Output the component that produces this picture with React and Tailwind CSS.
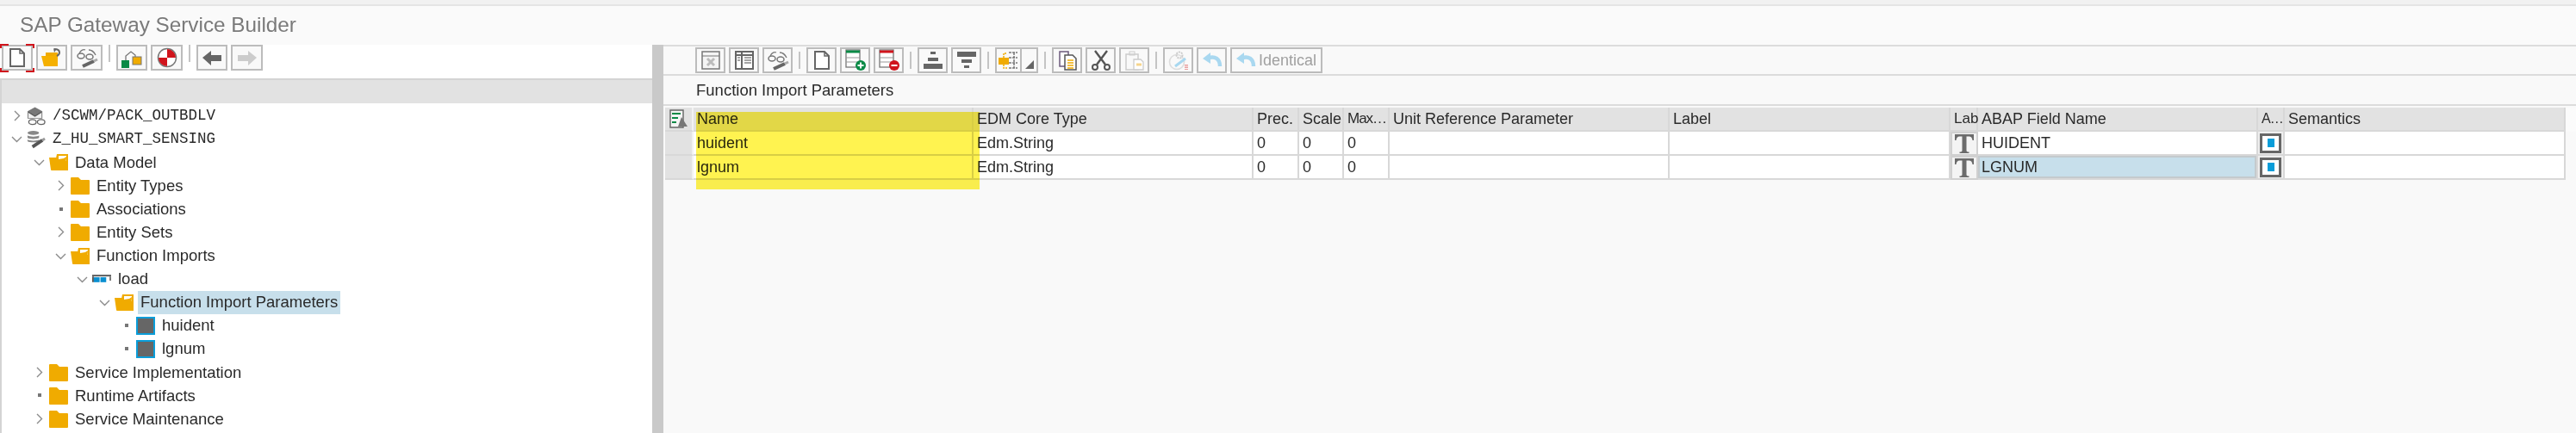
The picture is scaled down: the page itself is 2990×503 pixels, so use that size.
const sans = "font-['Liberation_Sans',Arial,sans-serif]";

const Btn = ({ children, small, wide }) => (
  <div className={`flex h-[30px] shrink-0 items-center justify-center border-2 border-[#bcbcbc] bg-[#f9f9f9] ${small ? 'w-[35px]' : wide ? 'w-[37px]' : 'w-[36px]'}`}>
    {children}
  </div>
);
const Sep = () => <div className="mx-[3px] h-[20px] w-[2px] shrink-0 bg-[#c4c4c4]" />;

const Svg = ({ children, w = 24, h = 24 }) => (
  <svg width={w} height={h} viewBox={`0 0 ${w} ${h}`} fill="none">{children}</svg>
);

const DocIcon = () => (
  <Svg><path d="M4 2h11l5 5v15H4z" fill="#fff" stroke="#666" strokeWidth="2" /><path d="M15 2v5h5" stroke="#666" strokeWidth="1.5" /></Svg>
);
const OpenIcon = () => (
  <Svg w={26} h={24}>
    <path d="M6 6h14v16H6z" fill="#f0ab00" />
    <path d="M1 10h14l5-4v16H4z" fill="#f5b000" />
    <path d="M16 2c4 0 6 1 6 4 0 2-1 3-3 4" stroke="#666" strokeWidth="2" /><path d="M15 1l3 2-2 3z" fill="#666" />
  </Svg>
);
const GlassIcon = () => (
  <Svg w={26} h={24}>
    <path d="M4 7c2-4 5-5 7-4M15 3c3 0 6 2 8 6" stroke="#777" strokeWidth="1.3" />
    <ellipse cx="6" cy="10" rx="4" ry="3" stroke="#777" strokeWidth="1.5" />
    <ellipse cx="16" cy="11" rx="4" ry="3" stroke="#777" strokeWidth="1.5" />
    <path d="M8 22l13-6" stroke="#666" strokeWidth="4" /><path d="M21 16l4-2" stroke="#aaa" strokeWidth="3" />
  </Svg>
);
const TreeIcon = () => (
  <Svg w={26} h={24}>
    <path d="M6 15v-5l6-5 5 4v3" stroke="#777" strokeWidth="1.3" />
    <rect x="1" y="15" width="9" height="9" fill="#0a8a46" />
    <rect x="14" y="11" width="10" height="9" fill="#f0ab00" stroke="#777" />
  </Svg>
);
const TargetIcon = () => (
  <Svg>
    <circle cx="12" cy="12" r="10.500" fill="#fff" stroke="#777" strokeWidth="1.500" />
    <path d="M12 2a10 10 0 0 1 10 10H12zM12 22A10 10 0 0 1 2 12h10z" fill="#d0141c" />
  </Svg>
);
const Arrow = ({ dir, color }) => (
  <Svg>
    <path d={dir === 'l' ? 'M1 12l10-8v5h12v7H11v5z' : 'M23 12l-10-8v5H1v7h12v5z'} fill={color} />
  </Svg>
);
const TableX = () => (
  <Svg>
    <rect x="2" y="2" width="20" height="20" fill="#f4f4f4" stroke="#777" strokeWidth="1.500" />
    <path d="M2 7h20" stroke="#777" />
    <path d="M8 10l8 8M16 10l-8 8" stroke="#bbb" strokeWidth="3" />
  </Svg>
);
const TableCols = () => (
  <Svg>
    <rect x="2" y="2" width="20" height="20" fill="#fff" stroke="#666" strokeWidth="2" />
    <path d="M2 6h20M9 2v20" stroke="#666" strokeWidth="2" />
    <path d="M12 9h8M12 12h8M12 15h8M4 9h3M4 12h3" stroke="#888" strokeWidth="1.300" />
  </Svg>
);
const RowIcon = ({ color, plus }) => (
  <Svg w={26} h={26}>
    <rect x="2" y="1" width="16" height="20" fill="#fff" stroke="#777" strokeWidth="1.300" />
    <path d="M2 3h16" stroke={color} strokeWidth="3" />
    <path d="M2 10h16M2 15h16" stroke="#999" />
    <circle cx="19" cy="19" r="6" fill={color} />
    <path d="M15.500 19h7" stroke="#fff" strokeWidth="2" />
    {plus && <path d="M19 15.500v7" stroke="#fff" strokeWidth="2" />}
  </Svg>
);
const SortUp = () => (
  <Svg><path d="M9 2h6v3H9zM6 9h12v4H6zM1 16h22v6H1z" fill="#666" /></Svg>
);
const SortDown = () => (
  <Svg><path d="M1 2h22v6H1zM6 11h12v4H6zM9 18h6v3H9z" fill="#666" /></Svg>
);
const Hier = () => (
  <Svg w={26} h={24}>
    <rect x="1" y="9" width="12" height="8" fill="#f0ab00" />
    <path d="M7 9V4h4M7 17v4h4" stroke="#f0ab00" strokeWidth="1.500" strokeDasharray="2 1" />
    <path d="M13 3h10M13 9h10M13 15h10M13 21h10M19 3v18" stroke="#777" strokeWidth="1.500" strokeDasharray="3 1" />
  </Svg>
);
const CopyIcon = () => (
  <Svg>
    <path d="M3 2h10v17H3z" fill="#fff" stroke="#6c5a7c" strokeWidth="1.500" />
    <path d="M9 6h9l4 4v13H9z" fill="#fff" stroke="#555" strokeWidth="1.500" />
    <path d="M12 12h7M12 15h7M12 18h7M12 21h7" stroke="#f0ab00" strokeWidth="1.600" />
  </Svg>
);
const Scissors = () => (
  <Svg>
    <path d="M5 1l12 16M19 1L7 17" stroke="#555" strokeWidth="2.400" />
    <circle cx="5" cy="20" r="3" stroke="#555" strokeWidth="2" />
    <circle cx="19" cy="20" r="3" stroke="#555" strokeWidth="2" />
  </Svg>
);
const PasteIcon = () => (
  <Svg>
    <path d="M2 5h14v18H2z" stroke="#ccc" strokeWidth="1.500" />
    <rect x="6" y="2" width="6" height="4" stroke="#ccc" />
    <path d="M11 11h8l3 3v9H11z" fill="#fff" stroke="#ccc" strokeWidth="1.300" />
    <path d="M14 17h6" stroke="#f6d58c" strokeWidth="3" />
  </Svg>
);
const GearIcon = () => (
  <Svg>
    <circle cx="10" cy="14" r="8.500" stroke="#ddd" strokeWidth="1.600" />
    <circle cx="13" cy="6" r="3.500" stroke="#ccc" strokeWidth="2" strokeDasharray="2 1" />
    <path d="M8 19l12-9" stroke="#a8d8f0" strokeWidth="3" />
    <path d="M21 17v6" stroke="#eaa0a0" strokeWidth="4" strokeDasharray="1.500 1" />
  </Svg>
);
const Undo = () => (
  <Svg>
    <path d="M1 10l9-7v13z" fill="#a9d8f0" />
    <path d="M8 9c7-2 13 1 13 10" stroke="#a9d8f0" strokeWidth="4.500" />
  </Svg>
);
const TextTypeIcon = () => (
  <svg width="24" height="24" viewBox="0 0 24 24">
    <path d="M1 1h22v7h-1.500c-.5-3-1.500-4.500-4-4.500h-3v16c0 1.500.5 2 3 2V23H6.500v-1.500c2.500 0 3-.5 3-2v-16h-3c-2.500 0-3.500 1.500-4 4.500H1z" fill="#6b6b6b" />
  </svg>
);

const Folder = () => (
  <Svg w={22} h={21}>
    <path d="M0 2a1 1 0 0 1 1-1h8l3 3h9a1 1 0 0 1 1 1v15a1 1 0 0 1-1 1H1a1 1 0 0 1-1-1z" fill="#f0ab00" />
  </Svg>
);
const FolderOpen = () => (
  <Svg w={22} h={21}>
    <path d="M9 1h13v19H5z" fill="#f0ab00" />
    <path d="M11 3h9v6h-9z" fill="#fff" />
    <path d="M0 5h8l3 2 6-1 3-2-1 15a1 1 0 0 1-1 1H3a1 1 0 0 1-1-1z" fill="#f0ab00" />
  </Svg>
);
const Param = () => (
  <div className="h-[21px] w-[22px] border-2 border-[#0a9dd9] bg-[#666]" />
);
const LoadIcon = () => (
  <Svg w={23} h={10}>
    <path d="M0 1h23" stroke="#555" strokeWidth="2" />
    <path d="M0 2h2v7H0z" fill="#555" />
    <path d="M2 3h7v6H2z" fill="#0a8fd0" />
    <path d="M10 3h7v6h-7z" fill="#0a8fd0" />
    <path d="M21 2h2v5h-2z" fill="#777" />
  </Svg>
);
const ServiceIcon = () => (
  <Svg w={23} h={22}>
    <path d="M1 5l9-5 9 5v9H1z" fill="#777" />
    <path d="M2 6l8 5 8-5v7H2z" fill="#eee" />
    <path d="M2 6l8 5 8-5" stroke="#555" strokeWidth="1.200" />
    <ellipse cx="7" cy="18" rx="4.500" ry="3" fill="#fff" stroke="#666" strokeWidth="1.400" />
    <ellipse cx="17.500" cy="18" rx="4.500" ry="3" fill="#fff" stroke="#666" strokeWidth="1.400" />
  </Svg>
);
const DbIcon = () => (
  <Svg w={23} h={22}>
    <ellipse cx="8" cy="3" rx="7" ry="2.500" fill="#888" />
    <path d="M1 6c2 2 12 2 14 0v3c-2 2-12 2-14 0zM1 11c2 2 12 2 14 0v2c-2 2-12 2-14 0z" fill="#888" />
    <path d="M7 20l12-8" stroke="#555" strokeWidth="4" />
    <path d="M19 12l3-2" stroke="#999" strokeWidth="3" />
  </Svg>
);

const Chevron = ({ kind }) => {
  if (kind === 'dot') return <div className="mx-auto h-[4px] w-[4px] bg-[#777]" />;
  return (
    <svg width="13" height="13" viewBox="0 0 13 13" fill="none" className="-ml-[1px]">
      <path d={kind === 'down' ? 'M1 4l5.500 5.500L12 4' : 'M4 1l5.500 5.500L4 12'} stroke="#8b8b8b" strokeWidth="1.400" />
    </svg>
  );
};

const levelPad = ['pl-[12px]', 'pl-[38px]', 'pl-[63px]', 'pl-[88px]', 'pl-[114px]', 'pl-[139px]'];

const TreeRow = ({ level, chev, icon, text, mono, selected }) => (
  <div className={`flex h-[27.08px] items-center ${levelPad[level]}`}>
    <div className="w-[11px] shrink-0"><Chevron kind={chev} /></div>
    <div className="ml-[6px] flex h-[22px] w-[22px] shrink-0 items-center justify-center">{icon}</div>
    <div className={`${selected ? 'ml-[5px] bg-[#c7dfeb] px-[3px]' : 'ml-[8px]'} flex h-[27px] items-center whitespace-pre text-[#2a2a2a] ${mono ? "font-['Liberation_Mono',monospace] text-[17.5px]" : 'text-[18.5px]'}`}>
      {text}
    </div>
  </div>
);

const cols = [
  { t: 'Name', w: 'w-[325px]', a: 'huident', b: 'lgnum' },
  { t: 'EDM Core Type', w: 'w-[325px]', a: 'Edm.String', b: 'Edm.String' },
  { t: 'Prec.', w: 'w-[53px]', a: '0', b: '0' },
  { t: 'Scale', w: 'w-[52px]', a: '0', b: '0' },
  { t: 'Max…', w: 'w-[53px]', a: '0', b: '0', head: 'text-[17px] tracking-[-1px]' },
  { t: 'Unit Reference Parameter', w: 'w-[325px]', a: '', b: '' },
  { t: 'Label', w: 'w-[326px]', a: '', b: '' },
  { t: 'Lab', w: 'w-[32px]', kind: 't', head: 'text-[17px]' },
  { t: 'ABAP Field Name', w: 'w-[325px]', a: 'HUIDENT', b: 'LGNUM', sel: true },
  { t: 'A…', w: 'w-[31px]', kind: 'radio', a: '', b: '', head: 'text-[16px] tracking-[-1px]' },
  { t: 'Semantics', w: 'w-[326px]', a: '', b: '' },
];

const Cell = ({ col, value, second }) => {
  if (col.kind === 't') {
    return (
      <div className={`${col.w} flex shrink-0 items-center justify-center border-2 border-[#d0d0d0] bg-[#f4f4f4]`}>
        <TextTypeIcon />
      </div>
    );
  }
  if (col.kind === 'radio') {
    return (
      <div className={`${col.w} flex shrink-0 items-center justify-center border-b-2 border-r-2 border-[#d8d8d8] bg-[#eee]`}>
        <div className="flex h-[23px] w-[25px] items-center justify-center border-[3px] border-[#666] bg-white">
          <div className="h-[10px] w-[8px] bg-[#0a9dd9]" />
        </div>
      </div>
    );
  }
  const selected = col.sel && second;
  return (
    <div className={`${col.w} flex shrink-0 items-center border-b-2 border-r-2 border-[#d8d8d8] bg-white text-[18px] text-[#2a2a2a]`}>
      <div className={`flex h-full w-full items-center ${selected ? 'border-2 border-[#c4cacd] bg-[#c7dfeb] pl-[2px]' : 'pl-[4px]'}`}>{value}</div>
    </div>
  );
};

export default function App() {
  return (
    <div className={`relative flex h-[503px] w-[2990px] flex-col overflow-hidden bg-[#f9f9f9] ${sans}`}>
      <div className="h-[7px] shrink-0 border-b-2 border-[#e4e4e4] bg-[#f1f1f1]" />
      <div className="flex h-[45px] shrink-0 items-center bg-[#fafafa] pl-[23px] text-[24.3px] text-[#7a7a7a]">SAP Gateway Service Builder</div>

      <div className="flex min-h-0 flex-1">
        {/* left */}
        <div className="flex w-[757px] shrink-0 flex-col bg-white">
          <div className="relative flex h-[39px] shrink-0 items-start gap-[4px] bg-white pl-[2px]">
            <Btn><DocIcon /></Btn>
            <Btn><OpenIcon /></Btn>
            <Btn wide><GlassIcon /></Btn>
            <Sep />
            <Btn><TreeIcon /></Btn>
            <Btn wide><TargetIcon /></Btn>
            <Sep />
            <Btn><Arrow dir="l" color="#666" /></Btn>
            <Btn wide><Arrow dir="r" color="#ccc" /></Btn>
            <div className="absolute left-0 top-[-1px] h-[5px] w-[10px] border-l-2 border-t-2 border-[#d0141c]" />
            <div className="absolute left-[30px] top-[-1px] h-[5px] w-[10px] border-r-2 border-t-2 border-[#d0141c]" />
            <div className="absolute left-0 top-[27px] h-[5px] w-[10px] border-b-2 border-l-2 border-[#d0141c]" />
            <div className="absolute left-[30px] top-[27px] h-[5px] w-[10px] border-b-2 border-r-2 border-[#d0141c]" />
          </div>
          <div className="h-[29px] shrink-0 border-l-2 border-t-2 border-[#d4d4d4] bg-[#e2e2e2]" />
          <div className="flex flex-1 flex-col border-l-2 border-[#d4d4d4] pt-[1px]">
            <TreeRow level={0} chev="right" icon={<ServiceIcon />} text="/SCWM/PACK_OUTBDLV" mono />
            <TreeRow level={0} chev="down" icon={<DbIcon />} text="Z_HU_SMART_SENSING" mono />
            <TreeRow level={1} chev="down" icon={<FolderOpen />} text="Data Model" />
            <TreeRow level={2} chev="right" icon={<Folder />} text="Entity Types" />
            <TreeRow level={2} chev="dot" icon={<Folder />} text="Associations" />
            <TreeRow level={2} chev="right" icon={<Folder />} text="Entity Sets" />
            <TreeRow level={2} chev="down" icon={<FolderOpen />} text="Function Imports" />
            <TreeRow level={3} chev="down" icon={<LoadIcon />} text="load" />
            <TreeRow level={4} chev="down" icon={<FolderOpen />} text="Function Import Parameters" selected />
            <TreeRow level={5} chev="dot" icon={<Param />} text="huident" />
            <TreeRow level={5} chev="dot" icon={<Param />} text="lgnum" />
            <TreeRow level={1} chev="right" icon={<Folder />} text="Service Implementation" />
            <TreeRow level={1} chev="dot" icon={<Folder />} text="Runtime Artifacts" />
            <TreeRow level={1} chev="right" icon={<Folder />} text="Service Maintenance" />
          </div>
        </div>

        {/* splitter */}
        <div className="w-[13px] shrink-0 bg-[#c9c9c9]" />

        {/* right */}
        <div className="relative flex min-w-0 flex-1 flex-col bg-[#f9f9f9]">
          <div className="flex h-[36px] shrink-0 items-center gap-[4px] border-y-2 border-[#dcdcdc] pl-[37px]">
            <Btn small><TableX /></Btn>
            <Btn small><TableCols /></Btn>
            <Btn small><GlassIcon /></Btn>
            <Sep />
            <Btn small><DocIcon /></Btn>
            <Btn small><RowIcon color="#0a8a46" plus /></Btn>
            <Btn small><RowIcon color="#d0141c" /></Btn>
            <Sep />
            <Btn small><SortUp /></Btn>
            <Btn small><SortDown /></Btn>
            <Sep />
            <div className="flex h-[30px] shrink-0">
              <div className="flex w-[31px] items-center justify-center border-2 border-[#bcbcbc] bg-[#f9f9f9]"><Hier /></div>
              <div className="relative w-[19px] border-y-2 border-r-2 border-[#bcbcbc] bg-[#f9f9f9]">
                <div className="absolute bottom-[3px] right-[3px] h-0 w-0 border-b-[10px] border-l-[10px] border-b-[#666] border-l-transparent" />
              </div>
            </div>
            <Sep />
            <Btn small><CopyIcon /></Btn>
            <Btn small><Scissors /></Btn>
            <Btn small><PasteIcon /></Btn>
            <Sep />
            <Btn small><GearIcon /></Btn>
            <Btn small><Undo /></Btn>
            <div className="flex h-[30px] w-[107px] shrink-0 items-center gap-[3px] border-2 border-[#bcbcbc] bg-[#f9f9f9] pl-[4px] text-[18px] text-[#a0a0a0]"><Undo />Identical</div>
          </div>
          <div className="flex h-[35px] shrink-0 items-center border-b-2 border-[#dcdcdc] pl-[38px] text-[18.5px] text-[#2a2a2a]">Function Import Parameters</div>

          <div className="mt-[2px] flex w-full shrink-0 flex-col pl-[2px]">
            <div className="flex h-[28px] text-[18px] text-[#2a2a2a]">
              <div className="flex w-[33px] shrink-0 items-center justify-center border-b-2 border-r-2 border-[#d8d8d8] border-r-[#f2f2f2] bg-[#e2e2e2]">
                <svg width="24" height="24" viewBox="0 0 24 24" fill="none">
                  <path d="M2 2h15v20H2z" fill="#f4f4f4" stroke="#666" strokeWidth="1.400" />
                  <path d="M4 6h10M4 11h7M4 16h5" stroke="#0a8a46" strokeWidth="2" />
                  <path d="M15 10l7 11h-11z" fill="#777" />
                </svg>
              </div>
              {cols.map((c) => (
                <div key={c.t} className={`${c.w} flex shrink-0 items-center whitespace-nowrap border-b-2 border-r-2 border-[#d8d8d8] bg-[#e2e2e2] pl-[4px] ${c.head || ''}`}>{c.t}</div>
              ))}
              <div className="flex-1 bg-[#fbfbfb]" />
            </div>
            {['a', 'b'].map((k) => (
              <div key={k} className="flex h-[28px]">
                <div className="w-[33px] shrink-0 border-b-2 border-r-2 border-[#d8d8d8] border-r-[#f2f2f2] bg-[#e2e2e2]" />
                {cols.map((c) => <Cell key={c.t} col={c} value={c[k]} second={k === 'b'} />)}
              </div>
            ))}
          </div>

          <div className="absolute left-[38px] top-[78px] h-[90px] w-[329px] bg-[#fff350] mix-blend-multiply" />
        </div>
      </div>
    </div>
  );
}
